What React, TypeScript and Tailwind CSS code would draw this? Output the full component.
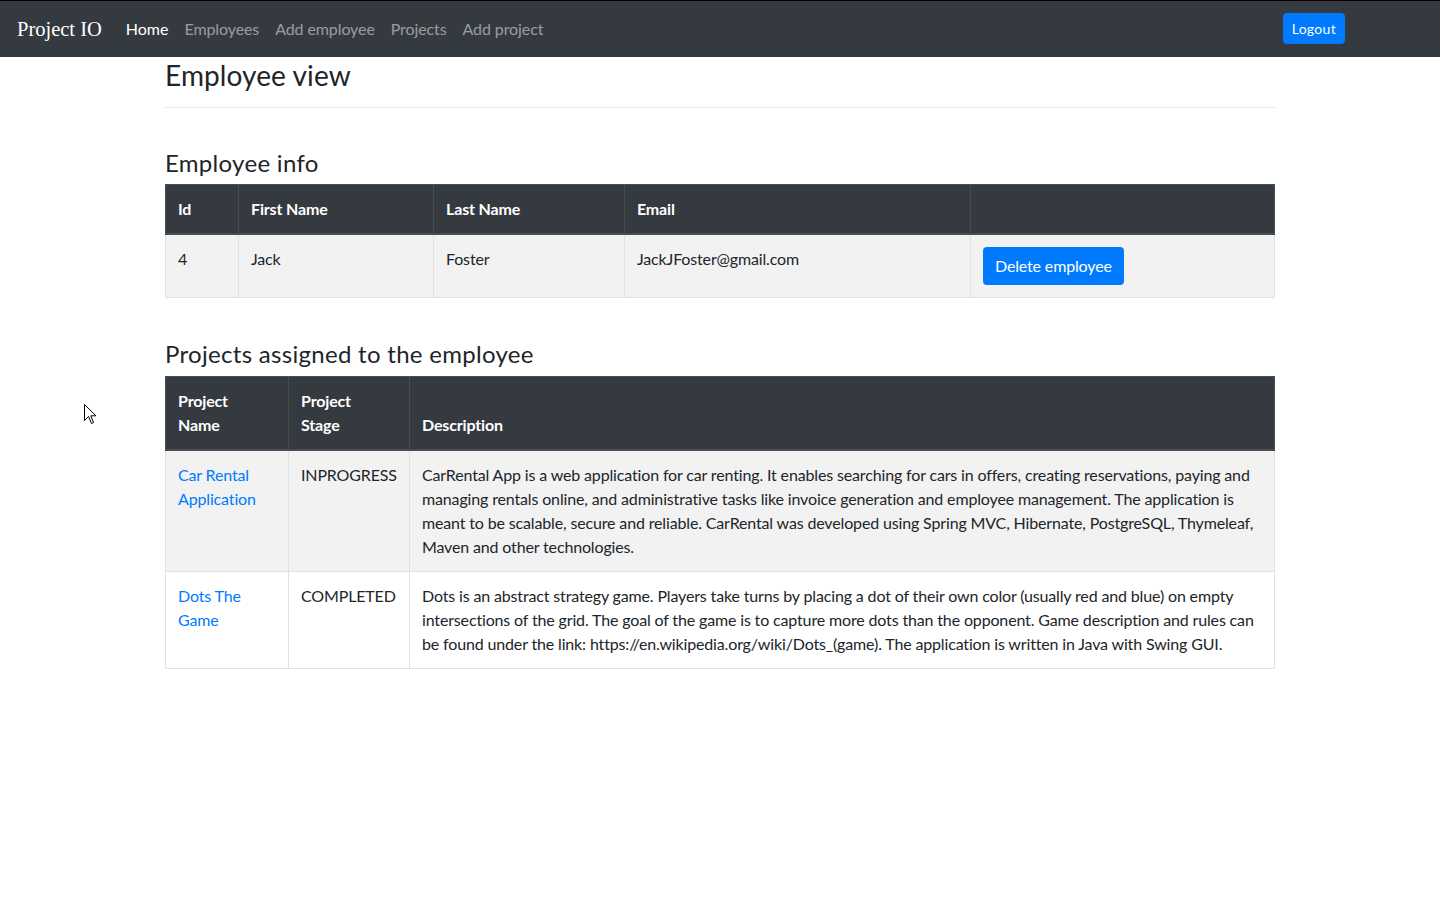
import React from 'react'

const navLinks = ['Employees', 'Add employee', 'Projects', 'Add project']

const projects = [
  {
    name: 'Car Rental Application',
    stage: 'INPROGRESS',
    description:
      'CarRental App is a web application for car renting. It enables searching for cars in offers, creating reservations, paying and managing rentals online, and administrative tasks like invoice generation and employee management. The application is meant to be scalable, secure and reliable. CarRental was developed using Spring MVC, Hibernate, PostgreSQL, Thymeleaf, Maven and other technologies.',
  },
  {
    name: 'Dots The Game',
    stage: 'COMPLETED',
    description:
      'Dots is an abstract strategy game. Players take turns by placing a dot of their own color (usually red and blue) on empty intersections of the grid. The goal of the game is to capture more dots than the opponent. Game description and rules can be found under the link: https://en.wikipedia.org/wiki/Dots_(game). The application is written in Java with Swing GUI.',
  },
]

function Navbar() {
  return (
    <nav className="flex h-[57px] items-center border-t border-black bg-[#343a40] pl-[17px] pr-[95px]">
      <span className="mr-4 font-['Liberation_Serif',serif] text-[20.5px] text-white">Project IO</span>
      <a className="px-2 text-white">Home</a>
      {navLinks.map((l) => (
        <a key={l} className="px-2 tracking-[-0.1px] text-white/50">
          {l}
        </a>
      ))}
      <button className="ml-auto mb-[1px] h-[31px] rounded bg-[#007bff] px-[9px] text-sm tracking-[0.3px] text-white">
        Logout
      </button>
    </nav>
  )
}

export default function App() {
  return (
    <div className="relative min-h-[900px] bg-white font-['Lato','Open_Sans',sans-serif] text-base leading-6 text-[#212529]">
      <Navbar />
      <main className="mx-auto w-[1110px]">
        <h3 className="mt-[2px] text-[28px] leading-[1.2] tracking-[0.1px]">Employee view</h3>
        <hr className="mt-[14px] border-black/10" />

        <h4 className="mt-[41px] mb-[7px] text-2xl leading-[1.2] tracking-[0.3px]">Employee info</h4>
        <table className="w-full border-collapse tracking-[-0.15px]">
          <thead>
            <tr className="bg-[#343a40] text-left text-white">
              <th className="w-[73px] border border-[#454d55] border-b-2 p-3 align-bottom font-bold">Id</th>
              <th className="w-[195px] border border-[#454d55] border-b-2 p-3 align-bottom font-bold">First Name</th>
              <th className="w-[191px] border border-[#454d55] border-b-2 p-3 align-bottom font-bold">Last Name</th>
              <th className="w-[346px] border border-[#454d55] border-b-2 p-3 align-bottom font-bold">Email</th>
              <th className="border border-[#454d55] border-b-2 p-3 align-bottom font-bold"></th>
            </tr>
          </thead>
          <tbody>
            <tr className="bg-[#f2f2f2]">
              <td className="border border-[#dee2e6] p-3 align-top">4</td>
              <td className="border border-[#dee2e6] p-3 align-top">Jack</td>
              <td className="border border-[#dee2e6] p-3 align-top">Foster</td>
              <td className="border border-[#dee2e6] p-3 align-top">JackJFoster@gmail.com</td>
              <td className="border border-[#dee2e6] p-3 align-top">
                <button className="h-[38px] rounded bg-[#007bff] px-3 text-white">Delete employee</button>
              </td>
            </tr>
          </tbody>
        </table>

        <h4 className="mt-[42px] mb-[7px] text-2xl leading-[1.2] tracking-[0.3px]">Projects assigned to the employee</h4>
        <table className="w-full border-collapse tracking-[-0.15px]">
          <thead>
            <tr className="bg-[#343a40] text-left text-white">
              <th className="w-[123px] border border-[#454d55] border-b-2 p-3 align-bottom font-bold">
                Project
                <br />
                Name
              </th>
              <th className="w-[121px] border border-[#454d55] border-b-2 p-3 align-bottom font-bold">
                Project
                <br />
                Stage
              </th>
              <th className="border border-[#454d55] border-b-2 p-3 align-bottom font-bold">Description</th>
            </tr>
          </thead>
          <tbody>
            {projects.map((p, i) => (
              <tr key={p.name} className={i % 2 === 0 ? 'bg-[#f2f2f2]' : 'bg-white'}>
                <td className="border border-[#dee2e6] p-3 align-top">
                  <a className="text-[#007bff]">{p.name}</a>
                </td>
                <td className="border border-[#dee2e6] p-3 align-top">{p.stage}</td>
                <td className="border border-[#dee2e6] p-3 align-top">{p.description}</td>
              </tr>
            ))}
          </tbody>
        </table>
      </main>

      <svg className="absolute left-[84px] top-[404px]" width="13" height="22" viewBox="0 0 13 22">
        <path d="M0.5 0.5 L0.5 16.5 L4.5 12.5 L7.5 19.5 L9.5 18.5 L6.8 11.8 L12 11.8 Z" fill="white" stroke="black" strokeWidth="1" />
      </svg>
    </div>
  )
}
